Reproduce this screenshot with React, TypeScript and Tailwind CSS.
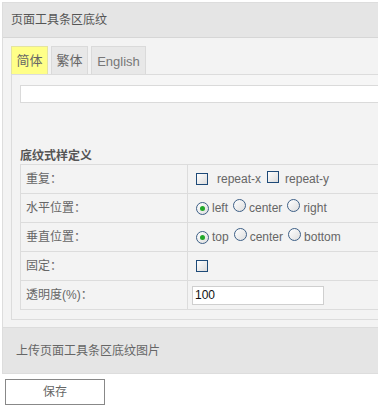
import React from "react";

function Check() {
  return (
    <span className="inline-block w-[12px] h-[12px] border border-[#1e4a78] bg-gradient-to-br from-[#ffffff] to-[#dcdcdc] shrink-0" />
  );
}

function Radio({ on }: { on?: boolean }) {
  return (
    <span className="inline-flex items-center justify-center w-[13px] h-[13px] rounded-full border border-[#3d5f86] bg-gradient-to-br from-[#ffffff] to-[#dedede] shrink-0">
      {on ? <span className="w-[5px] h-[5px] rounded-full bg-[#22a82a]" /> : null}
    </span>
  );
}

function Row({ label, children }: { label: string; children?: React.ReactNode }) {
  return (
    <div className="flex h-[29px] border-b border-[#dcdcdc]">
      <div className="w-[167px] border-r border-[#dcdcdc] flex items-center pl-[5px]">{label}</div>
      <div className="flex-1 flex items-center pl-[8px]">{children}</div>
    </div>
  );
}

export default function App() {
  return (
    <div className="w-[378px] h-[407px] overflow-hidden bg-white pt-[2px] pl-[2px] text-[12px] text-[#555] font-['Liberation_Sans','Noto_Sans_CJK_SC',sans-serif]">
      <div className="w-[420px] border border-[#dddddd]">
        <div className="h-[35px] bg-[#e5e5e5] border-b border-[#d6d6d6] flex items-center pl-[8px] text-[#555]">
          页面工具条区底纹
        </div>
        <div className="bg-[#f3f3f3] pt-[8px] pl-[8px] pb-[7px]">
          <div className="flex gap-[3px] h-[28px]">
            <div className="w-[37px] bg-[#ffff88] border border-[#e4e4a0] border-b-0 flex items-center justify-center text-[#666] text-[13px]">简体</div>
            <div className="w-[37px] bg-[#e8e8e8] border border-[#dadada] border-b-0 flex items-center justify-center text-[#666] text-[13px]">繁体</div>
            <div className="w-[55px] bg-[#e8e8e8] border border-[#dadada] border-b-0 flex items-center justify-center text-[#777] text-[13px] pt-[3px]">English</div>
          </div>
          <div className="border-l border-t border-b border-[#dcdcdc] pl-[8px] pb-[9px]">
            <div className="h-[10px] bg-[#f6f6f6]" />
            <div className="h-[18px] bg-white border border-[#dadada]" />
            <div className="mt-[45px] font-bold text-[#555] leading-[16px] h-[16px]">底纹式样定义</div>
            <div className="border-l border-t border-[#dcdcdc] text-[#666]">
              <Row label="重复：">
                <Check />
                <span className="ml-[9px]">repeat-x</span>
                <span className="ml-[6px]"><Check /></span>
                <span className="ml-[6px]">repeat-y</span>
              </Row>
              <Row label="水平位置：">
                <Radio on />
                <span className="ml-[3px]">left</span>
                <span className="ml-[5px]"><Radio /></span>
                <span className="ml-[3px]">center</span>
                <span className="ml-[5px]"><Radio /></span>
                <span className="ml-[3px]">right</span>
              </Row>
              <Row label="垂直位置：">
                <Radio on />
                <span className="ml-[3px]">top</span>
                <span className="ml-[5px]"><Radio /></span>
                <span className="ml-[3px]">center</span>
                <span className="ml-[5px]"><Radio /></span>
                <span className="ml-[3px]">bottom</span>
              </Row>
              <Row label="固定：">
                <Check />
              </Row>
              <Row label="透明度(%)：">
                <div className="-ml-[4px] w-[132px] h-[19px] bg-white border border-[#cfcfcf] flex items-center pl-[2px] text-[#111]">100</div>
              </Row>
            </div>
          </div>
        </div>
        <div className="h-[46px] bg-[#e5e5e5] border-t border-[#dcdcdc] flex items-center pl-[13px] text-[#666]">
          上传页面工具条区底纹图片
        </div>
      </div>
      <button className="mt-[5px] ml-[3px] w-[100px] h-[26px] bg-white border border-[#888] text-[#666] text-[12px] flex items-center justify-center">
        保存
      </button>
    </div>
  );
}
